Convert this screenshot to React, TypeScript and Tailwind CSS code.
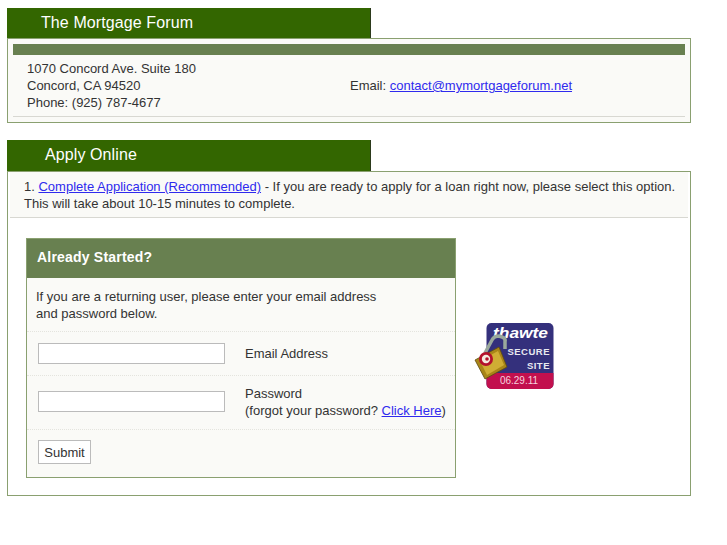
const FONT = { fontFamily: '"Liberation Sans", Arial, sans-serif' }

function SectionTab({ title, inset, height }: { title: string; inset: string; height: string }) {
  return (
    <div className={`w-[364px] bg-[#336600] border-r border-r-[#2c3a1c] pb-[2px] text-white text-[16px] tracking-[0.1px] flex items-center ${inset} ${height}`}>
      {title}
    </div>
  )
}

function ThawteSeal() {
  return (
    <svg width="84" height="72" viewBox="0 0 84 72" className="block">
      <rect x="12.5" y="3" width="67" height="66" rx="5" fill="#34307c" />
      <path d="M12.5 53 H79.5 V64 a5 5 0 0 1 -5 5 H17.5 a5 5 0 0 1 -5 -5 Z" fill="#c2104e" />
      <text x="19" y="18" textLength="55" lengthAdjust="spacingAndGlyphs" fontSize="15" fontWeight="700" fontStyle="italic" fill="#fff">thawte</text>
      <text x="76" y="35" textAnchor="end" fontSize="9.5" fontWeight="700" letterSpacing="0.5" fill="#e8e8f0">SECURE</text>
      <text x="76" y="49" textAnchor="end" fontSize="9.5" fontWeight="700" letterSpacing="0.5" fill="#e8e8f0">SITE</text>
      <text x="45" y="64" textAnchor="middle" fontSize="10" fill="#f6d0de">06.29.11</text>
      <path d="M11 33 L18 20 Q20 16 25 16 L28 17 Q32 18 31 22 V29" fill="none" stroke="#9aa89c" strokeWidth="3.5" />
      <path d="M1 40 L25 27 L33 47 L11 59 Z" fill="#a98618" stroke="#5e4a10" strokeWidth="0.8" />
      <path d="M6 41 L24 31 L30 45 L13 55 Z" fill="#d0ad34" />
      <circle cx="12" cy="39" r="7" fill="#b3122c" />
      <circle cx="12" cy="39" r="4.2" fill="#f4ece0" />
      <circle cx="13" cy="39" r="1.8" fill="#b3122c" />
    </svg>
  )
}

export default function App() {
  return (
    <div style={FONT} className="min-h-[545px] bg-white pt-2 pl-[7px] text-[13px] leading-[17px] text-[#333]">
      <div className="w-[684px]">
        <SectionTab title="The Mortgage Forum" inset="pl-[34px]" height="h-[30px]" />
        <div className="h-[85px] border border-[#8aa070] bg-[#fafaf7] px-[5px] pt-[5px]">
          <div className="h-[11px] bg-[#688050]" />
          <div className="flex h-[62px] border-b border-[#d8d8d2] pt-[5px]">
            <div className="w-[337px] pl-[14px]">
              <div>1070 Concord Ave. Suite 180</div>
              <div>Concord, CA 94520</div>
              <div>Phone: (925) 787-4677</div>
            </div>
            <div className="pt-[17px]">
              Email: <a href="#" className="text-[#2f2aee] underline">contact@mymortgageforum.net</a>
            </div>
          </div>
        </div>

        <div className="mt-[17px]">
          <SectionTab title="Apply Online" inset="pl-[38px]" height="h-[31px]" />
          <div className="h-[325px] border border-[#8aa070] bg-white">
            <div className="mx-[2px] h-[46px] border-b border-[#d8d8d2] bg-[#fafaf7] pl-[14px] pt-[6px]">
              <div>
                1. <a href="#" className="text-[#2f2aee] underline">Complete Application (Recommended)</a> - If you are ready to apply for a loan right now, please select this option.
              </div>
              <div>This will take about 10-15 minutes to complete.</div>
            </div>

            <div className="flex items-start pl-[18px] pt-[20px]">
              <div className="w-[430px] border border-[#8aa070] bg-[#fafaf7]">
                <div className="flex h-[39px] items-center bg-[#688050] pb-[2px] pl-[10px] text-[14px] font-bold tracking-[0.2px] text-white">
                  Already Started?
                </div>
                <div className="h-[54px] border-b border-dotted border-[#e4e4de] pl-[9px] pt-[10px]">
                  <div>If you are a returning user, please enter your email address</div>
                  <div>and password below.</div>
                </div>
                <div className="flex h-[44px] items-center border-b border-dotted border-[#e4e4de] pl-[11px]">
                  <input className="h-[21px] w-[187px] border border-[#bbb] bg-white" />
                  <span className="ml-[20px]">Email Address</span>
                </div>
                <div className="flex h-[54px] items-center border-b border-dotted border-[#e4e4de] pb-[2px] pl-[11px]">
                  <input className="h-[21px] w-[187px] border border-[#bbb] bg-white" />
                  <div className="ml-[20px]">
                    <div>Password</div>
                    <div>
                      (forgot your password? <a href="#" className="text-[#2f2aee] underline">Click Here</a>)
                    </div>
                  </div>
                </div>
                <div className="h-[47px] pl-[11px] pt-[10px]">
                  <button type="button" className="h-[24px] w-[53px] border border-[#bbb] bg-white text-[13px] text-[#333]">
                    Submit
                  </button>
                </div>
              </div>
              <div className="ml-[18px] mt-[82px]">
                <ThawteSeal />
              </div>
            </div>
          </div>
        </div>
      </div>
    </div>
  )
}
